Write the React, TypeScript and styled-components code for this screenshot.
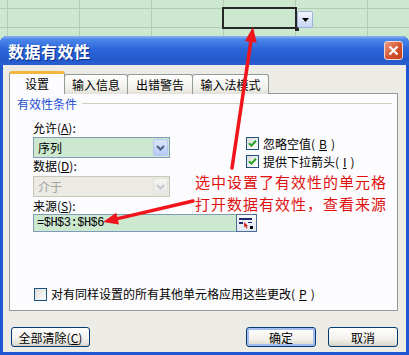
import styled, { createGlobalStyle, css } from "styled-components";

const GlobalStyle = createGlobalStyle`
  html, body {
    margin: 0;
    padding: 0;
  }
  body {
    width: 409px;
    height: 355px;
    overflow: hidden;
    background: #cce8cf;
    font-family: "Noto Sans CJK SC", "Noto Sans", sans-serif;
    font-size: 12px;
    color: #000;
  }
`;

const Page = styled.div`
  position: relative;
  width: 409px;
  height: 355px;
  overflow: hidden;
`;

// 背景表格
const Sheet = styled.div`
  display: grid;
  grid-template-columns: 7px repeat(6, 71px);
  grid-template-rows: 8px 18px 20px;
  gap: 1px;
  height: 36px;
  overflow: hidden;
  background: #b7c9b9;
`;

const Cell = styled.div<{ $active?: boolean }>`
  position: relative;
  background: #cce8cf;
  ${(p) =>
    p.$active &&
    css`
      z-index: 1;
      box-shadow: 0 0 0 2px #262626;
    `}
`;

const FillHandle = styled.div`
  position: absolute;
  right: -4px;
  bottom: -4px;
  width: 4px;
  height: 4px;
  background: #262626;
`;

const CellDrop = styled.div`
  position: absolute;
  left: calc(100% + 2px);
  top: 2px;
  width: 14px;
  height: 15px;
  border: 1px solid #9db2de;
  border-radius: 2px;
  background: linear-gradient(#f4f7fe, #c6d5f5);
  display: flex;
  align-items: center;
  justify-content: center;
`;

// 对话框
const Dialog = styled.div`
  height: 319px;
  display: flex;
  flex-direction: column;
  background: #1f56d2;
  border-radius: 7px 7px 0 0;
  padding: 0 3px 3px;
  box-sizing: border-box;
`;

const TitleBar = styled.div`
  height: 29px;
  margin: 0 -3px;
  padding: 0 6px 0 8px;
  display: flex;
  align-items: center;
  justify-content: space-between;
  border-radius: 7px 7px 0 0;
  background: linear-gradient(#8db4f2 0%, #4a86ea 12%, #2c66d9 45%, #2359cc 80%, #2a5fd0 100%);
`;

const Title = styled.h1`
  margin: 0;
  font-size: 16px;
  font-weight: bold;
  color: #fff;
  letter-spacing: 0.5px;
  text-shadow: 1px 1px 0 #0c2f8a;
`;

const CloseButton = styled.div`
  width: 19px;
  height: 19px;
  box-sizing: border-box;
  border: 1px solid #f3d8cf;
  border-radius: 3px;
  background: linear-gradient(135deg, #ec9a7c, #d2502c 60%, #c2441f);
  display: flex;
  align-items: center;
  justify-content: center;
`;

const Body = styled.div`
  flex: 1;
  background: #ecebe6;
  padding: 6px 8px 0 6px;
  display: flex;
  flex-direction: column;
`;

const TabRow = styled.div`
  display: flex;
  align-items: flex-end;
  height: 23px;
  margin-bottom: -1px;
  padding-left: 1px;
  position: relative;
  z-index: 1;
`;

const Tab = styled.div<{ $active?: boolean; $w: number }>`
  width: ${(p) => p.$w}px;
  box-sizing: border-box;
  display: flex;
  align-items: center;
  justify-content: center;
  border: 1px solid #919b9c;
  border-bottom: none;
  border-radius: 3px 3px 0 0;
  margin-left: -1px;
  ${(p) =>
    p.$active
      ? css`
          height: 23px;
          background: #fcfcfe;
          border-top: 3px solid #f3b53c;
          padding-bottom: 2px;
          z-index: 1;
        `
      : css`
          height: 20px;
          background: linear-gradient(#ffffff, #f1f0ea 70%, #e3e1d8);
        `}
`;

const Panel = styled.div`
  position: relative;
  height: 218px;
  box-sizing: border-box;
  border: 1px solid #919b9c;
  background: #fcfcfe;
  display: flex;
  flex-direction: column;
  padding-bottom: 9px;
`;

const GroupHeader = styled.div`
  display: flex;
  align-items: center;
  gap: 5px;
  height: 14px;
  margin-top: 2px;
  padding: 0 5px 0 7px;
  color: #1c4fd0;

  &::after {
    content: "";
    flex: 1;
    height: 1px;
    background: #d0d0bf;
  }
`;

const Fields = styled.div`
  display: grid;
  grid-template-columns: 137px auto;
  column-gap: 76px;
  padding-left: 23px;
`;

const Column = styled.div<{ $top?: number }>`
  display: flex;
  flex-direction: column;
  padding-top: ${(p) => p.$top ?? 0}px;
`;

const Label = styled.div<{ $top: number }>`
  height: 14px;
  line-height: 14px;
  margin-top: ${(p) => p.$top}px;
`;

const Combo = styled.div<{ $disabled?: boolean; $top: number }>`
  height: 21px;
  margin-top: ${(p) => p.$top}px;
  box-sizing: border-box;
  border: 1px solid ${(p) => (p.$disabled ? "#c9c7ba" : "#7f9db9")};
  background: ${(p) => (p.$disabled ? "#ebebe4" : "#cce8cf")};
  color: ${(p) => (p.$disabled ? "#a2a2a2" : "#000")};
  display: flex;
  align-items: center;
  justify-content: space-between;
  padding: 1px 1px 1px 4px;
`;

const ComboArrow = styled.div<{ $disabled?: boolean }>`
  width: 15px;
  height: 17px;
  box-sizing: border-box;
  border: 1px solid ${(p) => (p.$disabled ? "#e2e2de" : "#b6c8f2")};
  border-radius: 2px;
  background: ${(p) =>
    p.$disabled ? "linear-gradient(#f4f4f1, #e8e8e4)" : "linear-gradient(#dbe6fd, #b5cbf8)"};
  display: flex;
  align-items: center;
  justify-content: center;
`;

const CheckRow = styled.label<{ $top?: number; $h?: number }>`
  display: flex;
  align-items: center;
  gap: 4px;
  height: ${(p) => p.$h ?? 14}px;
  line-height: ${(p) => p.$h ?? 14}px;
  margin-top: ${(p) => p.$top ?? 0}px;
  white-space: nowrap;
`;

const Box = styled.span`
  width: 13px;
  height: 13px;
  box-sizing: border-box;
  border: 1px solid #1c5180;
  background: linear-gradient(135deg, #dcdcd6, #ffffff);
  display: flex;
  align-items: center;
  justify-content: center;
`;

const Source = styled.div`
  padding-left: 23px;
  display: flex;
  flex-direction: column;
`;

const SourceField = styled.div`
  display: flex;
  width: 224px;
  height: 18px;
  margin-top: 1px;
`;

const SourceInput = styled.div`
  flex: 1;
  box-sizing: border-box;
  border: 1px solid #7f9db9;
  border-right: none;
  background: #cce8cf;
  padding-left: 3px;
  line-height: 16px;
  font-family: "Liberation Mono", "DejaVu Sans Mono", monospace;
  font-size: 12px;
  letter-spacing: -0.5px;
`;

const RefButton = styled.div`
  width: 21px;
  box-sizing: border-box;
  border: 1px solid #4f6b98;
  background: linear-gradient(#f8f9fd, #dfe5f2);
  display: flex;
  align-items: center;
  justify-content: center;
`;

const Note = styled.div`
  position: absolute;
  left: 183px;
  top: 77px;
  padding: 0 2px;
  color: #e0100f;
  font-size: 15px;
  letter-spacing: 1px;
  line-height: 22px;
  white-space: nowrap;
`;

const Footer = styled.div`
  margin-top: auto;
  padding-left: 24px;
`;

const ButtonRow = styled.div`
  display: flex;
  align-items: center;
  margin-top: 16px;
  padding-left: 2px;
`;

const Spacer = styled.div`
  flex: 1;
`;

const Button = styled.button<{ $w: number; $default?: boolean }>`
  width: ${(p) => p.$w}px;
  height: 20px;
  margin-left: 12px;
  padding: 0;
  font: inherit;
  color: #000;
  border: 1px solid #003c74;
  border-radius: 3px;
  background: linear-gradient(#ffffff, #f2f1ec 60%, #e1ddd3 90%, #d6d0c5);
  box-shadow: ${(p) => (p.$default ? "inset 0 0 0 2px #a3bdf1" : "inset 0 -1px 0 #d6d0c5")};

  &:first-child {
    margin-left: 0;
  }
`;

const Overlay = styled.svg`
  position: absolute;
  left: 0;
  top: 0;
  pointer-events: none;
  z-index: 10;
`;

const Check = () => (
  <svg width="9" height="9" viewBox="0 0 9 9">
    <path d="M1 4.2 L3.4 6.6 L8 1.8" fill="none" stroke="#21a121" strokeWidth="2" />
  </svg>
);

const Chevron = ({ color }: { color: string }) => (
  <svg width="9" height="6" viewBox="0 0 9 6">
    <path d="M1 1 L4.5 4.5 L8 1" fill="none" stroke={color} strokeWidth="2" />
  </svg>
);

const App: React.FC = () => {
  const rows = [0, 1, 2];
  const cols = [0, 1, 2, 3, 4, 5, 6];

  return (
    <Page>
      <GlobalStyle />
      <Sheet>
        {rows.map((r) =>
          cols.map((c) => {
            const active = r === 1 && c === 4;
            return (
              <Cell key={`${r}-${c}`} $active={active}>
                {active && (
                  <>
                    <FillHandle />
                    <CellDrop>
                      <svg width="7" height="4" viewBox="0 0 7 4">
                        <path d="M0 0 H7 L3.5 4 Z" fill="#000" />
                      </svg>
                    </CellDrop>
                  </>
                )}
              </Cell>
            );
          })
        )}
      </Sheet>

      <Dialog>
        <TitleBar>
          <Title>数据有效性</Title>
          <CloseButton>
            <svg width="11" height="11" viewBox="0 0 11 11">
              <path d="M1.5 1.5 L9.5 9.5 M9.5 1.5 L1.5 9.5" stroke="#fff" strokeWidth="2.2" />
            </svg>
          </CloseButton>
        </TitleBar>

        <Body>
          <TabRow>
            <Tab $active $w={56}>设置</Tab>
            <Tab $w={64}>输入信息</Tab>
            <Tab $w={66}>出错警告</Tab>
            <Tab $w={77}>输入法模式</Tab>
          </TabRow>

          <Panel>
            <GroupHeader>有效性条件</GroupHeader>
            <Fields>
              <Column>
                <Label $top={11}>
                  允许(<u>A</u>):
                </Label>
                <Combo $top={2}>
                  序列
                  <ComboArrow>
                    <Chevron color="#4d6185" />
                  </ComboArrow>
                </Combo>
                <Label $top={1}>
                  数据(<u>D</u>):
                </Label>
                <Combo $disabled $top={3}>
                  介于
                  <ComboArrow $disabled>
                    <Chevron color="#c4c8d2" />
                  </ComboArrow>
                </Combo>
              </Column>
              <Column $top={27}>
                <CheckRow $h={13}>
                  <Box>
                    <Check />
                  </Box>
                  忽略空值(<u>B</u>)
                </CheckRow>
                <CheckRow $h={13} $top={5}>
                  <Box>
                    <Check />
                  </Box>
                  提供下拉箭头(<u>I</u>)
                </CheckRow>
              </Column>
            </Fields>

            <Source>
              <Label $top={2}>
                来源(<u>S</u>):
              </Label>
              <SourceField>
                <SourceInput>=$H$3:$H$6</SourceInput>
                <RefButton>
                  <svg width="15" height="12" viewBox="0 0 15 12">
                    <rect x="0" y="1" width="13" height="2" fill="#1a2a6c" />
                    <rect x="0" y="5" width="4" height="2" fill="#1a2a6c" />
                    <rect x="9" y="5" width="4" height="1" fill="#1a2a6c" />
                    <path d="M5 5 L9 9 L7.5 9.2 L8.6 11 L7.6 11.4 L6.6 9.6 L5.4 10.6 Z" fill="#d4160f" />
                    <rect x="11" y="9" width="3" height="3" fill="#000" />
                  </svg>
                </RefButton>
              </SourceField>
            </Source>

            <Note>
              选中设置了有效性的单元格
              <br />
              打开数据有效性，查看来源
            </Note>

            <Footer>
              <CheckRow>
                <Box />
                对有同样设置的所有其他单元格应用这些更改(<u>P</u>)
              </CheckRow>
            </Footer>
          </Panel>

          <ButtonRow>
            <Button $w={79}>全部清除(<u>C</u>)</Button>
            <Spacer />
            <Button $w={70} $default>
              确定
            </Button>
            <Button $w={70}>取消</Button>
          </ButtonRow>
        </Body>
      </Dialog>

      <Overlay width="409" height="355" viewBox="0 0 409 355">
        <path d="M232 168 L250.8 41.8" stroke="#f0141c" strokeWidth="3.5" strokeLinecap="round" />
        <polygon points="253,27 256.7,42.7 244.9,40.9" fill="#f0141c" />
        <path d="M193 201 L117.6 218.6" stroke="#f0141c" strokeWidth="3.5" strokeLinecap="round" />
        <polygon points="103,222 119,224.4 116.2,212.8" fill="#f0141c" />
      </Overlay>
    </Page>
  );
};

export default App;
